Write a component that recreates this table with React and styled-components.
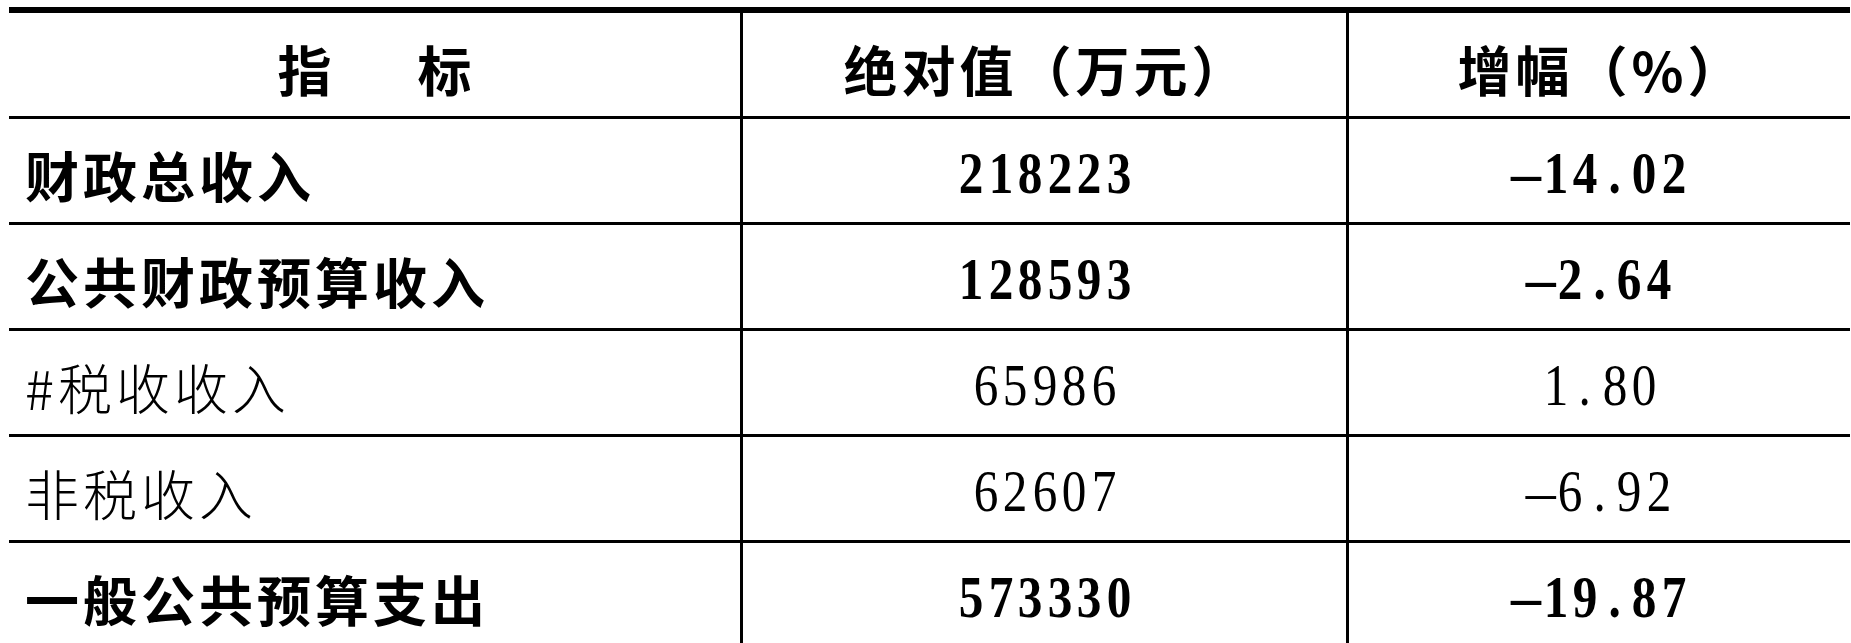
import React from 'react';
import styled, { createGlobalStyle } from 'styled-components';

const GlobalStyle = createGlobalStyle`
  html, body {
    margin: 0;
    padding: 0;
    background: #fff;
  }
  body {
    font-family: "Noto Sans CJK SC", "Noto Sans", sans-serif;
    color: #000;
  }
`;

const Page = styled.div`
  padding: 7px 1px 0 9px;
  height: 643px;
  box-sizing: border-box;
  overflow: hidden;
`;

const Table = styled.div`
  display: grid;
  grid-template-columns: 731px 606px 1fr;
  border-top: 6px solid #000;
`;

const Cell = styled.div`
  box-sizing: border-box;
  height: 106px;
  border-bottom: 3px solid #000;
  border-left: ${(p) => (p.$first ? 'none' : '3px solid #000')};
  display: flex;
  align-items: center;
  justify-content: ${(p) => (p.$left ? 'flex-start' : 'center')};
  padding-left: ${(p) => (p.$left ? '16px' : '0')};
`;

const HeadText = styled.span`
  font-size: 54px;
  font-weight: 600;
  letter-spacing: ${(p) => p.$spacing || 4}px;
  padding-left: ${(p) => p.$spacing || 4}px;
  padding-top: 8px;
  line-height: 1;
`;

const Label = styled.span`
  font-size: 54px;
  font-weight: ${(p) => (p.$bold ? 600 : 300)};
  letter-spacing: 4px;
  padding-top: 8px;
  line-height: 1;
`;

const NumWrap = styled.span`
  display: inline-flex;
  align-items: center;
  font-family: "Liberation Serif", "Times New Roman", serif;
  font-size: 60px;
  font-weight: ${(p) => (p.$bold ? 700 : 400)};
  line-height: 1;
  padding-top: 4px;
`;

const Digit = styled.span`
  display: inline-block;
  width: 29.5px;
  text-align: center;
  transform: ${(p) => (p.$sign ? 'none' : 'scaleX(0.82)')};
`;

const Num = ({ value, bold }) => (
  <NumWrap $bold={bold}>
    {value.split('').map((ch, i) =>
      ch === '-' ? (
        <Digit key={i} $sign>
          –
        </Digit>
      ) : (
        <Digit key={i}>{ch}</Digit>
      )
    )}
  </NumWrap>
);

const rows = [
  { label: '财政总收入', value: '218223', rate: '-14.02', bold: true },
  { label: '公共财政预算收入', value: '128593', rate: '-2.64', bold: true },
  { label: '#税收收入', value: '65986', rate: '1.80', bold: false },
  { label: '非税收入', value: '62607', rate: '-6.92', bold: false },
  { label: '一般公共预算支出', value: '573330', rate: '-19.87', bold: true },
];

export default function App() {
  return (
    <Page>
      <GlobalStyle />
      <Table>
        <Cell $first>
          <HeadText $spacing={16}>指　标</HeadText>
        </Cell>
        <Cell>
          <HeadText>绝对值（万元）</HeadText>
        </Cell>
        <Cell>
          <HeadText>增幅（%）</HeadText>
        </Cell>
        {rows.map((r) => (
          <React.Fragment key={r.label}>
            <Cell $first $left>
              <Label $bold={r.bold}>{r.label}</Label>
            </Cell>
            <Cell>
              <Num value={r.value} bold={r.bold} />
            </Cell>
            <Cell>
              <Num value={r.rate} bold={r.bold} />
            </Cell>
          </React.Fragment>
        ))}
      </Table>
    </Page>
  );
}
